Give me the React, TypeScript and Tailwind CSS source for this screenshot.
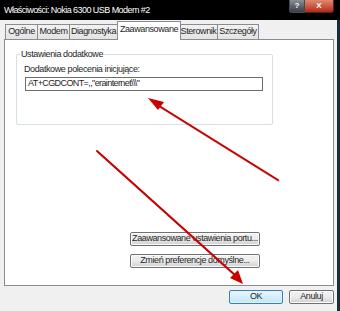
const tabs = ['Ogólne', 'Modem', 'Diagnostyka', 'Zaawansowane', 'Sterownik', 'Szczegóły'];
const tabWidths = ['w-[33px]', 'w-[33px]', 'w-[49px]', 'w-[64px]', 'w-[39px]', 'w-[42px]'];

const Btn = ({ label, w, def }: { label: string; w: string; def?: boolean }) => (
  <div
    className={`${w} h-[14px] flex items-center justify-center rounded-[2px] border text-[9px] tracking-[-0.4px] text-[#1e1e1e] ${
      def
        ? 'border-[#3c7fb1] bg-gradient-to-b from-[#eaf6fd] to-[#bee6fd] shadow-[inset_0_0_0_1px_#dff3fc]'
        : 'border-[#707070] bg-gradient-to-b from-[#f2f2f2] via-[#ebebeb] to-[#cfcfcf] shadow-[inset_0_0_0_1px_#fcfcfc]'
    }`}
  >
    {label}
  </div>
);

const Arrows = () => (
  <svg className="absolute inset-0 pointer-events-none" width="340" height="311">
    <g opacity="0.35" transform="translate(1.5,1.5)">
      <line x1="278" y1="180" x2="156" y2="104" stroke="#7a3030" strokeWidth="2" />
      <line x1="97" y1="151" x2="236" y2="276" stroke="#7a3030" strokeWidth="2" />
    </g>
    <line x1="278" y1="180" x2="156" y2="104" stroke="#c80000" strokeWidth="2" strokeLinecap="round" />
    <polygon points="148,98 164,102 158,110" fill="#c80000" />
    <line x1="97" y1="151" x2="236" y2="276" stroke="#c80000" strokeWidth="2" strokeLinecap="round" />
    <polygon points="243,284 230,278 238,270" fill="#c80000" />
  </svg>
);

export default function App() {
  return (
    <div
      className="relative w-[340px] h-[311px] overflow-hidden bg-[#f0f0f0] text-[#1e1e1e]"
      style={{ fontFamily: '"Liberation Sans", Arial, sans-serif' }}
    >
      <div className="h-[20px] bg-black flex items-start">
        <span className="pl-[4px] pt-[4px] text-[9px] tracking-[-0.55px] text-white leading-[12px]">
          Właściwości: Nokia 6300 USB Modem #2
        </span>
        <div className="ml-auto mr-[6px] flex">
          <div className="w-[16px] h-[13px] rounded-bl-[3px] border border-t-0 border-[#4a4a4a] bg-gradient-to-b from-[#8a8f96] to-[#3a3f46] flex items-center justify-center text-[8px] font-bold text-white">
            ?
          </div>
          <div className="w-[29px] h-[13px] rounded-br-[3px] border border-t-0 border-l-0 border-[#5a2020] bg-gradient-to-b from-[#e08870] to-[#b02810] flex items-center justify-center text-[8px] font-bold text-white">
            X
          </div>
        </div>
      </div>

      <div className="flex h-[291px]">
        <div className="flex-1 flex flex-col pl-[4px] pr-[3px] text-[9px] tracking-[-0.4px]">
          <div className="flex items-end h-[19px] pl-[1px]">
            {tabs.map((t, i) =>
              i === 3 ? (
                <div
                  key={t}
                  className={`${tabWidths[i]} h-[19px] -mx-[1px] z-10 bg-white border border-b-0 border-[#898c95] flex items-center justify-center -mb-[1px] pb-[2px]`}
                >
                  {t}
                </div>
              ) : (
                <div
                  key={t}
                  className={`${tabWidths[i]} h-[15px] bg-gradient-to-b from-[#f2f2f2] to-[#e3e3e3] border border-b-0 border-[#898c95] -ml-[1px] first:ml-0 flex items-center justify-center`}
                >
                  {t}
                </div>
              )
            )}
          </div>
          <div className="w-[330px] h-[247px] bg-white border border-[#898c95] flex flex-col">
            <div className="ml-[11px] mt-[14px] w-[257px] h-[71px] border border-[#d5dfe5] rounded-[2px] relative">
              <span className="absolute -top-[6px] left-[3px] bg-white px-[1px] leading-[10px]">
                Ustawienia dodatkowe
              </span>
              <div className="mt-[9px] ml-[7px] leading-[10px]">Dodatkowe polecenia inicjujące:</div>
              <div className="mt-[3px] ml-[8px] w-[238px] h-[14px] border border-[#6d6d6d] flex items-center pl-[2px] tracking-[-0.6px]">
                AT+CGDCONT=,,"erainternet\\\"
              </div>
            </div>
            <div className="mt-[107px] ml-[125px] flex flex-col gap-[8px]">
              <Btn label="Zaawansowane ustawienia portu..." w="w-[130px]" />
              <Btn label="Zmień preferencje domyślne..." w="w-[130px]" />
            </div>
          </div>
          <div className="flex justify-end gap-[6px] mt-[4px]">
            <Btn label="OK" w="w-[54px]" def />
            <Btn label="Anuluj" w="w-[45px]" />
          </div>
        </div>
        <div className="w-[3px] bg-[#1c2c34]" />
      </div>
      <Arrows />
    </div>
  );
}
